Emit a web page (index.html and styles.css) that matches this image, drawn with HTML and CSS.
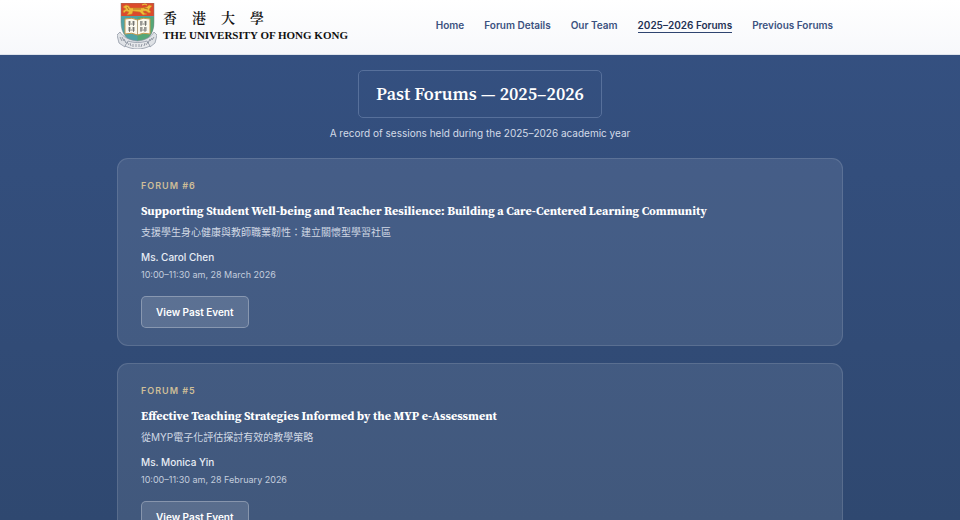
FILE: index.html
```html
<!DOCTYPE html>
<html lang="en">
<head>
  <meta charset="UTF-8">
  <meta name="viewport" content="width=device-width, initial-scale=1.0">
  <title>Past Forums — 2025–2026</title>
  <link rel="stylesheet" href="styles.css">
</head>
<body>
  <header class="site-header">
    <div class="container header-inner">
      <a class="logo" href="#">
        <svg class="crest" viewBox="0 0 40 46" aria-hidden="true">
          <!-- shield -->
          <path d="M4 0H37V19C37 31 31 37 20.500 42C10 37 4 31 4 19Z" fill="#4fa3a5"/>
          <path d="M20.500 14H37V19C37 31 31 37 20.500 42Z" fill="#55a777"/>
          <path d="M4 0H37V13H4Z" fill="#dc4a2c"/>
          <!-- lion -->
          <path d="M6 4L9 2L12 3L13 5H26L30 4L32 2L35 3L33 5L32 7L34 9L32 10L29 8L26 8L27 10L30 11L26 12L23 9L16 8L15 11L10 12L12 9L9 8L7 10L6 8L9 6Z" fill="#eebc3a" stroke="#c98a24" stroke-width=".5"/>
          <path d="M10 4L12 7M27 5L31 6M16 6H24" fill="none" stroke="#9b4e1c" stroke-width=".7"/>
          <path d="M25 2L28 1L30 2" fill="none" stroke="#eebc3a" stroke-width="1.200"/>
          <path d="M4 0H37V19C37 31 31 37 20.500 42C10 37 4 31 4 19Z" fill="none" stroke="#7a8580" stroke-width=".5"/>
          <!-- book -->
          <path d="M8 16Q15 14 20.500 17Q26 14 33 16V31Q26 29 20.500 32Q15 29 8 31Z" fill="#fbf9ee" stroke="#c79a4c" stroke-width="1"/>
          <path d="M20.500 17V32" stroke="#9d8a61" stroke-width=".8"/>
          <path d="M11 19H14M12.500 18V23M15 19H18M16.500 18V23M11 21H18M11 25H14M12.500 24V29M15 25H18M16.500 24V29M11 27H18M23 19H26M24 18V23M27 19H30M28.500 18V23M23 21H30M23 25H26M24 24V29M27 25H30M28 24V29M23 27H30" stroke="#4a4b4c" stroke-width=".65"/>
          <!-- motto ribbon -->
          <path d="M3 29L0 32L2 40L8 44L10 40C15 43 26 43 31 40L33 44L38 40L40 32L37 29C34 34 29 37 20.500 38C12 37 6 34 3 29Z" fill="#dfe2e6" stroke="#858e9c" stroke-width=".7"/>
          <path d="M8 43C16 47 25 47 33 43L30 38C24 40 17 40 11 38Z" fill="#e6e8eb" stroke="#858e9c" stroke-width=".7"/>
          <path d="M3 34L5 38M5 34L7 38M7 36L9 40M10 39L12 42M13 40L14 43M16 41V44M19 41V44M22 41V44M25 41L24 44M28 40L27 43M31 39L29 42M33 36L31 40M35 35L33 38M37 34L35 37" stroke="#717a88" stroke-width=".7"/>
        </svg>
        <span class="logo-text">
          <span class="logo-zh" lang="zh-Hant"><span>香</span><span>港</span><span>大</span><span>學</span></span>
          <span class="logo-en">THE UNIVERSITY OF HONG KONG</span>
        </span>
      </a>
      <nav class="nav">
        <a href="#">Home</a>
        <a href="#">Forum Details</a>
        <a href="#">Our Team</a>
        <a href="#" class="active" aria-current="page">2025–2026 Forums</a>
        <a href="#">Previous Forums</a>
      </nav>
    </div>
  </header>

  <main class="container">
    <div class="page-title">
      <h1>Past Forums — 2025–2026</h1>
      <p>A record of sessions held during the 2025–2026 academic year</p>
    </div>

    <article class="card">
      <p class="forum-label">FORUM #6</p>
      <h2>Supporting Student Well-being and Teacher Resilience: Building a Care-Centered Learning Community</h2>
      <p class="zh" lang="zh-Hant">支援學生身心健康與教師職業韌性：建立關懷型學習社區</p>
      <p class="speaker">Ms. Carol Chen</p>
      <p class="date">10:00–11:30 am, 28 March 2026</p>
      <button type="button" class="btn">View Past Event</button>
    </article>

    <article class="card">
      <p class="forum-label">FORUM #5</p>
      <h2>Effective Teaching Strategies Informed by the MYP e-Assessment</h2>
      <p class="zh" lang="zh-Hant">從MYP電子化評估探討有效的教學策略</p>
      <p class="speaker">Ms. Monica Yin</p>
      <p class="date">10:00–11:30 am, 28 February 2026</p>
      <button type="button" class="btn">View Past Event</button>
    </article>
  </main>
</body>
</html>
```
FILE: styles.css
```css
*{margin: 0; padding: 0; box-sizing: border-box;}
body{
  min-height: 100vh;
  font-family: Inter, "Noto Sans CJK TC", sans-serif;
  font-size: 10px; line-height: 16px;
  color: #fff;
  background: linear-gradient(#355182, #2f4870 520px);
}
.container{
  max-width: 774px;
  margin: 0 auto;
  padding: 0 24px;
}

/* header */
.site-header{
  background: linear-gradient(#fff, #f7f8fb);
  border-bottom: 1px solid #dfe4ec;
}
.header-inner{
  display: flex;
  align-items: center;
  justify-content: space-between;
  padding-top: 3px; padding-bottom: 5px;
}
.logo{
  display: flex;
  gap: 6px;
  color: #111;
  text-decoration: none;
}
.crest{width: 40px; height: 46px;}
.logo-text{padding-top: 5px;}
.logo-zh{
  display: flex;
  gap: 15px;
  font-family: "Noto Serif CJK TC", "Noto Sans CJK TC", serif;
  font-size: 14px; line-height: 18px;
  font-weight: 600;
}
.logo-en{
  display: block;
  font-family: "Liberation Serif", serif;
  font-size: 11px; line-height: 18px;
  font-weight: 700;
  white-space: nowrap;
}
.nav{
  display: flex;
  gap: 20px;
  padding: 0 10px 1px 0;
}
.nav a{
  color: #3b5280;
  font-weight: 600;
  line-height: 14px;
  text-decoration: none;
  white-space: nowrap;
  border-bottom: 1px solid transparent;
}
.nav a.active{color: #1f3154; border-color: #2f4470;}

/* title */
.page-title{
  padding: 15px 0 17px;
  text-align: center;
}
.page-title h1{
  display: inline-block;
  padding: 8px 17px;
  border: 1px solid #57709b;
  border-radius: 5px;
  font-family: "Source Serif 4", "Source Serif Pro", "Liberation Serif", serif;
  font-size: 18px; line-height: 30px;
  font-weight: 600;
}
.page-title p{
  margin-top: 7px;
  color: #d3dbe8;
}

/* cards */
.card{
  margin-bottom: 17px;
  padding: 19px 23px 17px;
  background: rgba(255, 255, 255, .09);
  border: 1px solid rgba(255, 255, 255, .12);
  border-radius: 11px;
}
.forum-label{
  color: #cebe98;
  font-size: 9px;
  font-weight: 600;
  letter-spacing: 1px;
}
.card h2{
  margin-top: 7px;
  font-family: "Source Serif 4", "Source Serif Pro", "Liberation Serif", serif;
  font-size: 12px; line-height: 20px;
  font-weight: 700;
}
.zh{margin-top: 3px; color: #d0d8e4;}
.speaker{
  margin-top: 9px;
  color: #e8edf5;
  font-weight: 500;
}
.date{margin-top: 2px; color: #c3cddd; font-size: 9px;}
.btn{
  display: block;
  margin-top: 13px;
  padding: 7px 14px;
  background: rgba(255, 255, 255, .13);
  border: 1px solid rgba(255, 255, 255, .28);
  border-radius: 5px;
  color: #fff;
  font-family: inherit;
  font-size: 10px; line-height: 16px;
  font-weight: 600;
  cursor: pointer;
}
```
